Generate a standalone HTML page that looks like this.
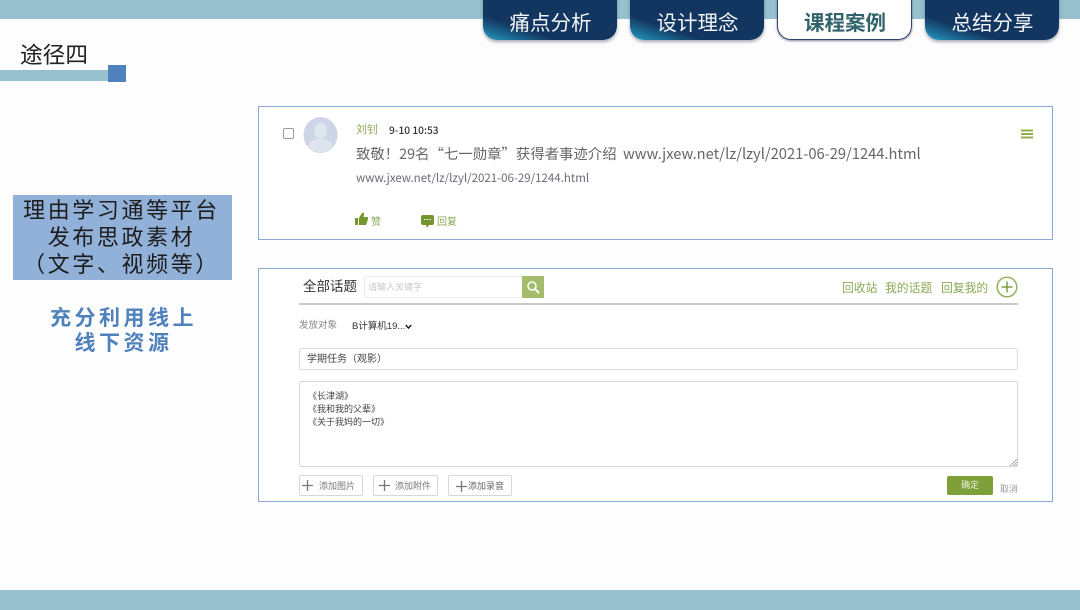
<!DOCTYPE html>
<html lang="zh-CN"><head><meta charset="utf-8">
<style>
html,body{margin:0;padding:0}
html{background:#fdfdfd}
body{width:1080px;height:610px;position:relative;overflow:hidden;background:#fdfdfd;font-family:"Liberation Sans","Noto Sans CJK SC",sans-serif;color:#333;filter:blur(.35px)}
.a{position:absolute;white-space:nowrap}
.bar{background:#97c1cf}
.tab{position:absolute;top:-4px;height:44px;border-radius:0 0 14px 14px;background:linear-gradient(to top right,#2b9fc6 0%,#1c6f99 12%,#12365f 28%,#12365f 100%);box-shadow:0 2px 3px rgba(60,70,90,.45);color:#f2f6f8;font-size:20.500px;line-height:56px;text-align:center;text-indent:1px}
.tab.on{background:#fff;color:#33636a;font-weight:bold;border:1px solid #33466e;border-top:none;box-shadow:0 1px 2px rgba(40,50,90,.6);box-sizing:border-box}
.box{position:absolute;background:#fff;border:1px solid #8aaad6;box-sizing:border-box}
.in{position:absolute;background:#fff;border:1px solid #dedede;box-sizing:border-box;border-radius:2px}
.btn{position:absolute;top:475px;height:21px;background:#fff;border:1px solid #d8d8d8;box-sizing:border-box;border-radius:2px;font-size:9px;color:#666;line-height:20px}
.g{color:#8aa956}
.n{font-family:"Noto Sans CJK SC","Liberation Sans",sans-serif}
</style></head><body>
<div class="a bar" style="left:0;top:0;width:1080px;height:19px"></div>
<div class="a bar" style="left:0;top:590px;width:1080px;height:20px"></div>

<div class="tab" style="left:483px;width:134px">痛点分析</div>
<div class="tab" style="left:630px;width:134px">设计理念</div>
<div class="tab on" style="left:777px;width:135px">课程案例</div>
<div class="tab" style="left:925px;width:134px">总结分享</div>

<div class="a" style="left:20px;top:41px;font-size:22.700px;line-height:28px;color:#222">途径四</div>
<div class="a bar" style="left:0;top:70px;width:108px;height:11px"></div>
<div class="a" style="left:108px;top:65px;width:18px;height:17px;background:#4f81bd"></div>

<div class="a" style="left:13px;top:195px;width:219px;height:85px;background:#92b1d8;color:#1c1c1c;font-size:22px;line-height:27px;letter-spacing:2.600px;text-align:center;padding:2px 2px 0 0;box-sizing:border-box">理由学习通等平台<br>发布思政素材<br>（文字、视频等）</div>
<div class="a" style="left:14px;top:306px;width:219px;color:#4f81bd;font-size:21px;font-weight:bold;line-height:25px;letter-spacing:3.500px;text-align:center">充分利用线上<br>线下资源</div>

<!-- post card -->
<div class="box" style="left:258px;top:106px;width:795px;height:134px"></div>
<div class="a" style="left:283px;top:128px;width:9px;height:9px;border:1px solid #9a9a9a;border-radius:2px;background:#fff"></div>
<svg class="a" style="left:303px;top:117px" width="35" height="37" viewBox="0 0 35 37"><ellipse cx="17.500" cy="18" rx="17" ry="18" fill="#ccd6e6"/><ellipse cx="17.500" cy="14" rx="6.500" ry="8" fill="#dfe5ef"/><path d="M5 29c2-5 7-6 9-7h7c2 1 7 2 9 7-3 4-8 6-12.500 6S8 33 5 29z" fill="#dfe5ef"/></svg>
<div class="a g" style="left:356px;top:122px;font-size:11px;line-height:16px">刘钊</div>
<div class="a n" style="left:389px;top:122px;font-size:10.200px;line-height:16px;color:#333;font-weight:500">9-10 10:53</div>
<div class="a n" style="left:356px;top:143px;font-size:14.400px;line-height:21px;color:#666">致敬！29名“七一勋章”获得者事迹介绍</div>
<div class="a n" style="left:623px;top:143px;font-size:14.700px;line-height:21px;color:#666">www.jxew.net/lz/lzyl/2021-06-29/1244.html</div>
<div class="a n" style="left:356px;top:170px;font-size:11.500px;line-height:16px;color:#6b6b78">www.jxew.net/lz/lzyl/2021-06-29/1244.html</div>
<svg class="a" style="left:355px;top:212px" width="13" height="14" viewBox="0 0 13 14"><path d="M0 6h3v7H0zM4 6l3-5c1-1 2.500 0 2 1.500L8.500 5H12c1 0 1.300 1 1 2l-1.500 5c-.2.700-.7 1-1.500 1H4z" fill="#75962f"/></svg>
<div class="a g" style="left:371px;top:215px;font-size:10px;line-height:15px">赞</div>
<svg class="a" style="left:421px;top:215px" width="13" height="13" viewBox="0 0 13 13"><path d="M2 0h9a2 2 0 0 1 2 2v6a2 2 0 0 1-2 2H8l-2 3-1-3H2a2 2 0 0 1-2-2V2a2 2 0 0 1 2-2z" fill="#75962f"/><path d="M3 4.500h1.500M5.800 4.500h1.500M8.600 4.500h1.500" stroke="#fff" stroke-width="1"/></svg>
<div class="a g" style="left:437px;top:215px;font-size:10px;line-height:15px">回复</div>
<svg class="a" style="left:1021px;top:129px" width="12" height="10"><path d="M0 1.500h12M0 5h12M0 8.500h12" stroke="#8fb04a" stroke-width="2"/></svg>

<!-- form card -->
<div class="box" style="left:258px;top:268px;width:795px;height:234px"></div>
<div class="a" style="left:303px;top:278px;font-size:13.500px;line-height:18px;color:#333">全部话题</div>
<div class="in" style="left:364px;top:276px;width:158px;height:22px;border-color:#ececec;border-right:none"></div>
<div class="a" style="left:368px;top:280px;font-size:9px;line-height:14px;color:#c8c8c8">请输入关键字</div>
<div class="a" style="left:522px;top:276px;width:22px;height:22px;background:#a3bd6d"></div>
<svg class="a" style="left:526px;top:280px" width="14" height="14" viewBox="0 0 14 14"><circle cx="6" cy="6" r="4" fill="none" stroke="#fff" stroke-width="1.500"/><path d="M9 9l4 4" stroke="#fff" stroke-width="2"/></svg>
<div class="a g" style="left:842px;top:280px;font-size:11.800px;line-height:17px">回收站</div>
<div class="a g" style="left:885px;top:280px;font-size:11.800px;line-height:17px">我的话题</div>
<div class="a g" style="left:941px;top:280px;font-size:11.800px;line-height:17px">回复我的</div>
<svg class="a" style="left:996px;top:276px" width="22" height="22" viewBox="0 0 22 22"><circle cx="11" cy="11" r="9.800" fill="#fff" stroke="#93b35a" stroke-width="1.500"/><path d="M11 5.500v11M5.500 11h11" stroke="#7f9f45" stroke-width="1.500"/></svg>
<div class="a" style="left:299px;top:303px;width:719px;height:2px;background:#c9c9c9"></div>

<div class="a" style="left:299px;top:319px;font-size:9.500px;line-height:14px;color:#888">发放对象</div>
<div class="a" style="left:352px;top:320px;font-size:9.500px;line-height:14px;color:#333">B计算机19...</div>
<svg class="a" style="left:405px;top:324px" width="7" height="6"><path d="M.8 1l2.700 3L6.200 1" fill="none" stroke="#222" stroke-width="1.500"/></svg>

<div class="in" style="left:299px;top:348px;width:719px;height:22px"></div>
<div class="a" style="left:307px;top:353px;font-size:10px;line-height:14px;color:#444">学期任务（观影）</div>

<div class="in" style="left:299px;top:381px;width:719px;height:86px;border-color:#d8d8d8"></div>
<div class="a" style="left:308px;top:390px;font-size:9px;line-height:13.200px;color:#444">《长津湖》<br>《我和我的父辈》<br>《关于我妈的一切》</div>
<svg class="a" style="left:1009px;top:458px" width="8" height="8"><path d="M1 8l7-7M4 8l4-4M6.500 8L8 6.500" stroke="#999" stroke-width=".8"/></svg>

<div class="btn" style="left:299px;width:64px"></div>
<div class="btn" style="left:373px;width:65px"></div>
<div class="btn" style="left:448px;width:64px"></div>
<svg class="a" style="left:302px;top:480px" width="11" height="11"><path d="M5.500 0v11M0 5.500h11" stroke="#777" stroke-width="1.300"/></svg>
<svg class="a" style="left:379px;top:480px" width="11" height="11"><path d="M5.500 0v11M0 5.500h11" stroke="#777" stroke-width="1.300"/></svg>
<svg class="a" style="left:456px;top:481px" width="11" height="11"><path d="M5.500 0v11M0 5.500h11" stroke="#777" stroke-width="1.300"/></svg>
<div class="a" style="left:319px;top:479px;font-size:9px;line-height:14px;color:#777">添加图片</div>
<div class="a" style="left:395px;top:479px;font-size:9px;line-height:14px;color:#777">添加附件</div>
<div class="a" style="left:468px;top:479px;font-size:9px;line-height:14px;color:#666">添加录音</div>

<div class="a" style="left:947px;top:476px;width:46px;height:19px;background:#7f9f38;border-radius:2px;color:#e8f0d8;font-size:9px;line-height:19px;text-align:center">确定</div>
<div class="a" style="left:1000px;top:482px;font-size:9px;line-height:14px;color:#999">取消</div>
</body></html>
